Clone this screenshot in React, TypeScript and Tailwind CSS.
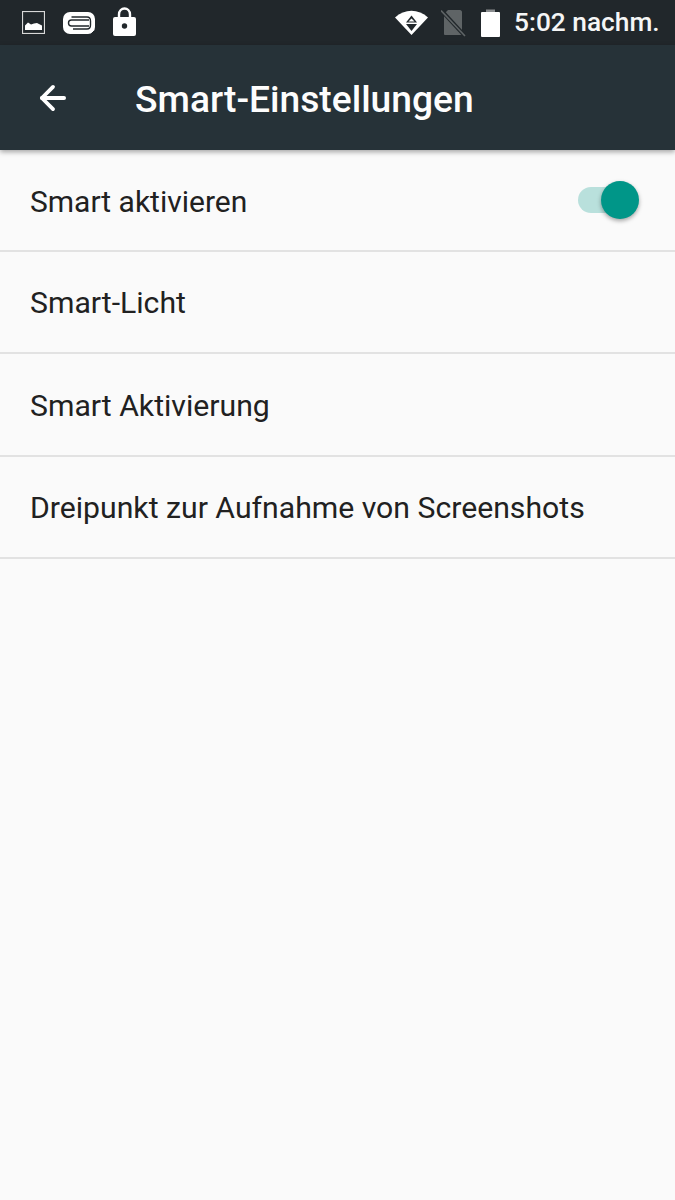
import { ArrowLeft } from "lucide-react"

const rows = [
    { label: "Smart-Licht", height: "h-[102px]" },
    { label: "Smart Aktivierung", height: "h-[103px]" },
    { label: "Dreipunkt zur Aufnahme von Screenshots", height: "h-[102px]" },
]

function StatusBar() {
    return (
        <div className="h-[45px] bg-[#21272b] flex items-center justify-between pl-[22px] pr-[16px] text-white">
            <div className="flex items-center">
                {/* picture */}
                <svg width="23" height="23" viewBox="0 0 23 23" className="mr-[18px]">
                    <rect x="0.5" y="0.5" width="22" height="22" fill="none" stroke="#d8d8d8" strokeWidth="1.2" />
                    <path d="M3 19V14.5L6 11.5L9 13.5L12 12.5L15 12L20 14.5V19Z" fill="#fff" />
                </svg>
                {/* game */}
                <svg width="33" height="24" viewBox="0 0 33 24" className="mr-[17px]">
                    <rect x="0" y="1" width="32" height="22" rx="7" fill="#fff" />
                    <path d="M26 9H8.5C4.500 9 4.500 15 8.500 15H26" fill="none" stroke="#21272b" strokeWidth="1.4" />
                    <path d="M8.500 6H24C26.500 6 27.500 7.500 27.500 10V14C27.500 16 26.500 18 24 18H10" fill="none" stroke="#21272b" strokeWidth="1.400" />
                    <path d="M31 20L28 23" stroke="#21272b" strokeWidth="1" />
                </svg>
                {/* lock */}
                <svg width="23" height="29" viewBox="0 0 23 29" className="-mt-[2px]">
                    <path d="M6 12V7.5C6 -0.5 17 -0.5 17 7.5V12" fill="none" stroke="#fff" strokeWidth="2.4" />
                    <rect x="0" y="10" width="23" height="19" rx="2" fill="#fff" />
                    <circle cx="11.5" cy="19" r="2.7" fill="#21272b" />
                </svg>
            </div>
            <div className="flex items-center">
                {/* wifi with data arrows */}
                <svg width="33" height="25" viewBox="0 0 33 25" className="mr-[13px]">
                    <path d="M0 7.5C9.5 -1.5 23.5 -1.5 33 7.5L16.5 25Z" fill="#fff" />
                    <path d="M16.5 5.500L22 12.500H11Z" fill="#21272b" />
                    <path d="M16.500 8.500L19.500 11.500H13.500Z" fill="#fff" />
                    <path d="M11 14H22L16.500 21Z" fill="#21272b" />
                </svg>
                {/* no sim */}
                <svg width="25" height="28" viewBox="0 0 25 28" className="mr-[15px]">
                    <path d="M3 5L7 1H19C20 1 21 2 21 3V26H4C3.500 26 3 25.500 3 25Z" fill="#5f6466" />
                    <path d="M0 1L24 27" stroke="#21272b" strokeWidth="4" />
                    <path d="M0 1.500L24 27" stroke="#5f6466" strokeWidth="1.600" />
                </svg>
                {/* battery */}
                <svg width="19" height="28" viewBox="0 0 19 28" className="mr-[14px]">
                    <path d="M5 3V0.500H14V3" fill="#8a8d8f" />
                    <rect x="0" y="3" width="19" height="25" rx="1" fill="#fff" />
                </svg>
                <span className="w-[145px] font-['Roboto',sans-serif] font-medium text-[26.3px] leading-none text-[#f5f6f6] whitespace-nowrap">5:02 nachm.</span>
            </div>
        </div>
    )
}

function Toggle() {
    return (
        <div className="relative w-[61px] h-[26px] mr-[36px]">
            <div className="h-[26px] w-[52px] rounded-full bg-[#b9e0dc]" />
            <div className="absolute right-0 top-[-6px] w-[38px] h-[38px] rounded-full bg-[#009688] shadow-[0_2px_4px_rgba(0,0,0,0.35)]" />
        </div>
    )
}

export default function App() {
    return (
        <div className="w-[675px] h-[1200px] bg-[#fafafa] font-['Roboto',sans-serif] overflow-hidden">
            <StatusBar />
            <div className="relative h-[105px] bg-[#263238] flex items-center shadow-[0_2px_5px_rgba(0,0,0,0.35)]">
                <ArrowLeft size={38} strokeWidth={2.4} color="#fff" className="ml-[34px]" />
                <h1 className="ml-[63px] pt-[4px] text-[37.2px] font-medium text-[#fdfdfd] leading-none">Smart-Einstellungen</h1>
            </div>
            <div className="h-[102px] flex items-center justify-between border-b-2 border-[#e2e2e2] pl-[30px]">
                <span className="pt-[2px] text-[30px] text-[#212121]">Smart aktivieren</span>
                <Toggle />
            </div>
            {rows.map((row) => (
                <div key={row.label} className={`${row.height} flex items-center border-b-2 border-[#e2e2e2] pl-[30px]`}>
                    <span className="pt-[2px] text-[30.2px] text-[#212121]">{row.label}</span>
                </div>
            ))}
        </div>
    )
}
